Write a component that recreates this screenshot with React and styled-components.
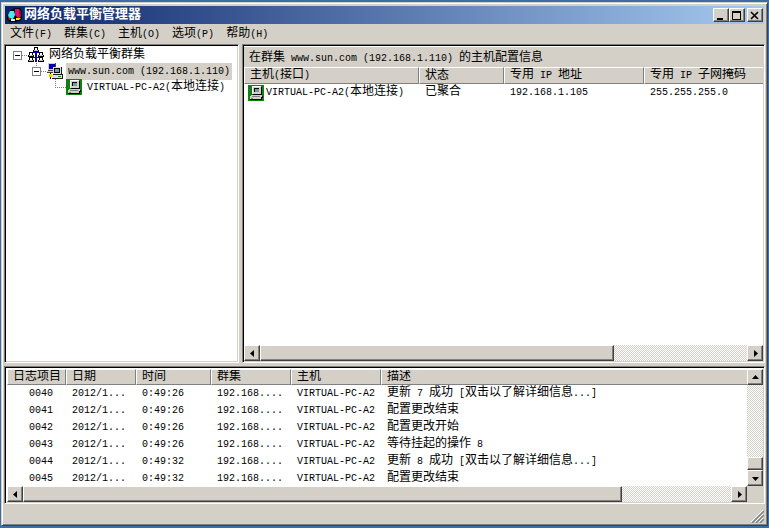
import { Fragment } from 'react';
import styled, { createGlobalStyle, css } from 'styled-components';

const GlobalStyle = createGlobalStyle`
      * {
            box-sizing: border-box;
      }

      body {
            margin: 0;
            background: #3a6ea5;
            color: #000;
            font-family: 'Liberation Mono', 'Noto Sans CJK SC', monospace;
            font-size: 12px;
            line-height: 16px;
            overflow: hidden;
      }

      button {
            font: inherit;
            color: inherit;
            padding: 0;
            border: 0;
            background: none;
      }

      svg {
            display: block;
            flex: none;
      }
`;

const raised = css`
      background: #d4d0c8;
      border: 1px solid;
      border-color: #fff #404040 #404040 #fff;
      box-shadow: inset -1px -1px 0 #808080;
`;

const Desktop = styled.div`
      height: 100vh;
      padding: 2px 1px;
      display: flex;
      background: #3a6ea5;
`;

const Window = styled.main`
      flex: 1;
      min-width: 0;
      display: flex;
      flex-direction: column;
      padding: 2px;
      background: #d4d0c8;
      border: 1px solid;
      border-color: #d4d0c8 #404040 #404040 #d4d0c8;
      box-shadow: inset 1px 1px 0 #fff, inset -1px -1px 0 #808080;
`;

const TitleBar = styled.header`
      display: flex;
      align-items: center;
      flex: none;
      height: 18px;
      padding: 0 1px 0 2px;
      margin: 1px 1px 0;
      background: linear-gradient(90deg, #0a246a, #a6caf0);
      color: #fff;
`;

const Title = styled.h1`
      flex: 1;
      margin: 0;
      padding-left: 1px;
      font-size: 13px;
      font-weight: bold;
      line-height: 18px;
      white-space: nowrap;
`;

const CaptionButton = styled.button`
      ${raised}
      width: 16px;
      height: 14px;
      display: grid;
      place-items: center;
      margin-left: ${({ $apart }) => ($apart ? '2px' : '0')};
`;

const MenuBar = styled.nav`
      display: flex;
      flex: none;
      height: 20px;
`;

const MenuItem = styled.button`
      padding: 0 6px;
      line-height: 20px;
      white-space: pre;
`;

const Latin = styled.span`
      font-size: 10px;
      white-space: pre;
`;

const Panes = styled.div`
      flex: 1;
      min-height: 0;
      display: flex;
      gap: 3px;
`;

const Sunken = styled.section`
      display: flex;
      flex-direction: column;
      min-width: 0;
      overflow: hidden;
      background: #fff;
      border: 1px solid;
      border-color: #808080 #fff #fff #808080;
      box-shadow: inset 1px 1px 0 #000, inset -1px -1px 0 #d4d0c8;
      padding: 2px 1px 1px;
`;

const TreePane = styled(Sunken)`
      width: 235px;
      flex: none;
`;

const HostPane = styled(Sunken)`
      flex: 1;
`;

const LogPane = styled(Sunken)`
      flex: none;
      height: 138px;
      margin-top: 3px;
      padding-left: 2px;
`;

const TreeRow = styled.div`
      display: flex;
      align-items: center;
      height: 16px;
      padding-left: 3px;
`;

const TreeLabel = styled.span`
      margin-left: 3px;
      padding: 0 2px;
      line-height: 16px;
      white-space: nowrap;
      background: ${({ $selected }) => ($selected ? '#d4d0c8' : 'transparent')};
`;

const Expander = styled.button`
      display: block;
      width: 19px;
      height: 16px;
`;

const Gutter = styled.span`
      width: 19px;
      height: 16px;
`;

const Caption = styled.h2`
      flex: none;
      margin: 0;
      padding: 2px 5px 0;
      height: 20px;
      background: #d4d0c8;
      font-size: 12px;
      font-weight: normal;
      line-height: 18px;
      white-space: nowrap;
`;

const TableArea = styled.div`
      flex: 1;
      min-height: 0;
      overflow: hidden;
`;

const Table = styled.table`
      width: 100%;
      table-layout: fixed;
      border-collapse: separate;
      border-spacing: 0;
`;

const Th = styled.th`
      height: 16px;
      padding: 0 5px;
      background: #d4d0c8;
      border: 1px solid;
      border-color: #fff #808080 #808080 #fff;
      font-weight: normal;
      line-height: 14px;
      text-align: ${({ $align }) => $align || 'left'};
      white-space: nowrap;
      overflow: hidden;

      &:last-child {
            border-right: 0;
      }
`;

const Td = styled.td`
      height: 17px;
      padding: 0 ${({ $align }) => ($align ? '13px' : '6px')} 0 6px;
      line-height: 17px;
      text-align: ${({ $align }) => $align || 'left'};
      white-space: nowrap;
`;

const HostCell = styled.td`
      height: 17px;
      padding: 0 4px;
      white-space: nowrap;
`;

const HostName = styled.span`
      display: flex;
      align-items: center;
      gap: 2px;
      height: 16px;
`;

const LogBody = styled.div`
      flex: 1;
      min-height: 0;
      display: flex;
`;

const ScrollRow = styled.div`
      display: flex;
      flex: none;
`;

const Bar = styled.div`
      display: flex;
      flex: ${({ $vertical }) => ($vertical ? 'none' : '1')};
      flex-direction: ${({ $vertical }) => ($vertical ? 'column' : 'row')};
      background: repeating-conic-gradient(#fff 0 25%, #d4d0c8 0 50%) 0 0 / 2px 2px;
`;

const ArrowButton = styled.button`
      ${raised}
      flex: none;
      width: 16px;
      height: 16px;
      display: grid;
      place-items: center;
`;

const Gap = styled.span`
      flex: ${({ $grow }) => $grow} 1 0;
`;

const Thumb = styled.span`
      ${raised}
      flex: ${({ $grow }) => $grow} 1 0;
`;

const Corner = styled.span`
      width: 16px;
      background: #d4d0c8;
`;

const StatusBar = styled.footer`
      flex: none;
      display: flex;
      justify-content: flex-end;
      align-items: flex-end;
      height: 19px;
      padding-right: 1px;
`;

/* half-width runs are set smaller so that two of them fill one full-width cell */
const Mixed = ({ text }) =>
      text
            .split(/([\x20-\x7e]+)/)
            .filter(Boolean)
            .map((run, i) =>
                  /^[\x20-\x7e]/.test(run) ? (
                        <Latin key={i}>{run}</Latin>
                  ) : (
                        <Fragment key={i}>{run}</Fragment>
                  )
            );

const AppIcon = () => (
      <svg width="16" height="16" viewBox="0 0 16 16">
            <path d="M4 3 8 1l5 0 2 4v6l-2 3-5 1-5 0-3-3 0-4z" fill="#000" />
            <path d="M3 4h4l1 4-2 4-4-1-1-3z" fill="#40f0f0" />
            <path d="M8 2h4l2 3v5l-3 1-3-3z" fill="#e0106c" />
            <path d="M12 3l2 2v5l-1 0z" fill="#900040" />
            <path d="M9 11l5 0-2 2H9z" fill="#f8f000" />
            <path d="M4 12h4v2H4z" fill="#e8e8e8" />
            <path d="M1 10h1l2 3H2z" fill="#f00000" />
      </svg>
);

const ClusterIcon = () => (
      <svg width="16" height="16" viewBox="0 0 16 16" shapeRendering="crispEdges">
            <path d="M7 4h2v11H7zM4 5h9v1H4zM4 10h9v1H4z" fill="#0000c0" />
            {[
                  [6, 0],
                  [1, 5],
                  [11, 5],
                  [1, 10],
                  [11, 10],
            ].map(([x, y]) => (
                  <g key={`${x}-${y}`}>
                        <rect x={x} y={y} width="4" height="4" fill="#000" />
                        <rect x={x + 1} y={y + 1} width="2" height="2" fill="#fff" />
                        <rect x={x - 1} y={y + 3} width="6" height="2" fill="#000" />
                        <rect x={x} y={y + 3} width="4" height="1" fill="#c0c0c0" />
                  </g>
            ))}
      </svg>
);

const PairIcon = () => (
      <svg width="16" height="16" viewBox="0 0 16 16" shapeRendering="crispEdges">
            <path d="M1 0h8v7h1v3H0V8h1z" fill="#404040" />
            <path d="M1 0h7v7H1zM0 8h7v1H0z" fill="#d4d0c8" />
            <path d="M2 1h6v5H2z" fill="#0000a8" />
            <path d="M3 10h1v6H3zM3 13h3v1H3z" fill="#000080" />
            <path d="M2 11h3v3H2z" fill="#e8d800" />
            <path d="M6 4h9v7h1v5H5v-4h1z" fill="#202020" />
            <path d="M6 4h8v7H6zM5 12h10v3H5z" fill="#e0ded8" />
            <path d="M7 5h6v5H7z" fill="#000" />
            <path d="M8 6h4v3H8z" fill="#60a8a8" />
            <path d="M11 13h3v1h-3z" fill="#00a000" />
      </svg>
);

const HostIcon = () => (
      <svg width="16" height="16" viewBox="0 0 16 16" shapeRendering="crispEdges">
            <rect width="16" height="16" fill="#108010" />
            <path d="M5 2h9v8H5zM3 11h12v1l-1 3H2v-2z" fill="#000" />
            <path d="M4 1h9v8H4z" fill="#d4d0c8" />
            <path d="M4 1h9v1H5v7H4z" fill="#fff" />
            <path d="M6 3h5v4H6z" fill="#000" />
            <path d="M7 4h4v3H7z" fill="#68a0a0" />
            <path d="M3 10h11v1l-1 3H2v-2z" fill="#d4d0c8" />
            <path d="M4 11h8v1H4zM3 13h2v1H3z" fill="#808080" />
      </svg>
);

const ExpanderBox = ({ lineUp }) => (
      <svg width="19" height="16" viewBox="0 0 19 16" shapeRendering="crispEdges">
            {lineUp && (
                  <path d="M8.500 0v4" stroke="#808080" strokeDasharray="1 1" />
            )}
            <path d="M13 8.500h6" stroke="#808080" strokeDasharray="1 1" />
            <rect x="4.500" y="4.500" width="8" height="8" fill="#fff" stroke="#808080" />
            <path d="M6 8.500h5" stroke="#000" />
      </svg>
);

const Elbow = () => (
      <svg width="19" height="16" viewBox="0 0 19 16" shapeRendering="crispEdges">
            <path d="M8.500 0v8.500h11" fill="none" stroke="#808080" strokeDasharray="1 1" />
      </svg>
);

const ARROWS = {
      left: 'M5 0v7L1 3.500z',
      right: 'M2 0v7l4-3.500z',
      up: 'M0 5h7L3.500 1z',
      down: 'M0 2h7L3.500 6z',
};

const Arrow = ({ dir, label }) => (
      <ArrowButton aria-label={label}>
            <svg width="7" height="7" viewBox="0 0 7 7">
                  <path d={ARROWS[dir]} />
            </svg>
      </ArrowButton>
);

const ScrollBar = ({ vertical, before = 0, thumb, after }) => (
      <Bar $vertical={vertical}>
            <Arrow dir={vertical ? 'up' : 'left'} label={vertical ? '向上' : '向左'} />
            <Gap $grow={before} />
            <Thumb $grow={thumb} />
            <Gap $grow={after} />
            <Arrow dir={vertical ? 'down' : 'right'} label={vertical ? '向下' : '向右'} />
      </Bar>
);

const MENUS = ['文件(F)', '群集(C)', '主机(O)', '选项(P)', '帮助(H)'];

const LOGS = [
      ['0040', '0:49:26', '更新 7 成功 [双击以了解详细信息...]'],
      ['0041', '0:49:26', '配置更改结束'],
      ['0042', '0:49:26', '配置更改开始'],
      ['0043', '0:49:26', '等待挂起的操作 8'],
      ['0044', '0:49:32', '更新 8 成功 [双击以了解详细信息...]'],
      ['0045', '0:49:32', '配置更改结束'],
];

const App = () => {
      return (
            <Desktop>
                  <GlobalStyle />
                  <Window>
                        <TitleBar>
                              <AppIcon />
                              <Title>网络负载平衡管理器</Title>
                              <CaptionButton aria-label="最小化">
                                    <svg width="10" height="9" shapeRendering="crispEdges">
                                          <path d="M1 7h6v2H1z" />
                                    </svg>
                              </CaptionButton>
                              <CaptionButton aria-label="最大化">
                                    <svg width="10" height="9" shapeRendering="crispEdges">
                                          <path d="M0 0h9v9H0zM1 2v6h7V2z" fillRule="evenodd" />
                                    </svg>
                              </CaptionButton>
                              <CaptionButton aria-label="关闭" $apart>
                                    <svg width="10" height="9">
                                          <path d="M1 1l7 7M8 1l-7 7" stroke="#000" strokeWidth="1.600" />
                                    </svg>
                              </CaptionButton>
                        </TitleBar>

                        <MenuBar>
                              {MENUS.map((name) => (
                                    <MenuItem key={name}>
                                          <Mixed text={name} />
                                    </MenuItem>
                              ))}
                        </MenuBar>

                        <Panes>
                              <TreePane>
                                    <TreeRow>
                                          <Expander aria-label="折叠">
                                                <ExpanderBox />
                                          </Expander>
                                          <ClusterIcon />
                                          <TreeLabel>网络负载平衡群集</TreeLabel>
                                    </TreeRow>
                                    <TreeRow>
                                          <Gutter />
                                          <Expander aria-label="折叠">
                                                <ExpanderBox lineUp />
                                          </Expander>
                                          <PairIcon />
                                          <TreeLabel $selected>
                                                <Mixed text="www.sun.com (192.168.1.110)" />
                                          </TreeLabel>
                                    </TreeRow>
                                    <TreeRow>
                                          <Gutter />
                                          <Gutter />
                                          <Elbow />
                                          <HostIcon />
                                          <TreeLabel>
                                                <Mixed text="VIRTUAL-PC-A2(本地连接)" />
                                          </TreeLabel>
                                    </TreeRow>
                              </TreePane>

                              <HostPane>
                                    <Caption>
                                          <Mixed text="在群集 www.sun.com (192.168.1.110) 的主机配置信息" />
                                    </Caption>
                                    <TableArea>
                                          <Table>
                                                <colgroup>
                                                      <col width="175" />
                                                      <col width="85" />
                                                      <col width="140" />
                                                      <col />
                                                </colgroup>
                                                <thead>
                                                      <tr>
                                                            {['主机(接口)', '状态', '专用 IP 地址', '专用 IP 子网掩码'].map((name) => (
                                                                  <Th key={name}>
                                                                        <Mixed text={name} />
                                                                  </Th>
                                                            ))}
                                                      </tr>
                                                </thead>
                                                <tbody>
                                                      <tr>
                                                            <HostCell>
                                                                  <HostName>
                                                                        <HostIcon />
                                                                        <span>
                                                                              <Mixed text="VIRTUAL-PC-A2(本地连接)" />
                                                                        </span>
                                                                  </HostName>
                                                            </HostCell>
                                                            <Td>已聚合</Td>
                                                            <Td>
                                                                  <Mixed text="192.168.1.105" />
                                                            </Td>
                                                            <Td>
                                                                  <Mixed text="255.255.255.0" />
                                                            </Td>
                                                      </tr>
                                                </tbody>
                                          </Table>
                                    </TableArea>
                                    <ScrollRow>
                                          <ScrollBar thumb={354} after={134} />
                                    </ScrollRow>
                              </HostPane>
                        </Panes>

                        <LogPane>
                              <LogBody>
                                    <TableArea>
                                          <Table>
                                                <colgroup>
                                                      <col width="59" />
                                                      <col width="70" />
                                                      <col width="75" />
                                                      <col width="80" />
                                                      <col width="90" />
                                                      <col />
                                                </colgroup>
                                                <thead>
                                                      <tr>
                                                            <Th $align="right">日志项目</Th>
                                                            <Th>日期</Th>
                                                            <Th>时间</Th>
                                                            <Th>群集</Th>
                                                            <Th>主机</Th>
                                                            <Th>描述</Th>
                                                      </tr>
                                                </thead>
                                                <tbody>
                                                      {LOGS.map(([id, time, text]) => (
                                                            <tr key={id}>
                                                                  <Td $align="right">
                                                                        <Mixed text={id} />
                                                                  </Td>
                                                                  <Td>
                                                                        <Mixed text="2012/1..." />
                                                                  </Td>
                                                                  <Td>
                                                                        <Mixed text={time} />
                                                                  </Td>
                                                                  <Td>
                                                                        <Mixed text="192.168...." />
                                                                  </Td>
                                                                  <Td>
                                                                        <Mixed text="VIRTUAL-PC-A2" />
                                                                  </Td>
                                                                  <Td>
                                                                        <Mixed text={text} />
                                                                  </Td>
                                                            </tr>
                                                      ))}
                                                </tbody>
                                          </Table>
                                    </TableArea>
                                    <ScrollBar vertical before={75} thumb={11} after={0} />
                              </LogBody>
                              <ScrollRow>
                                    <ScrollBar thumb={599} after={109} />
                                    <Corner />
                              </ScrollRow>
                        </LogPane>

                        <StatusBar>
                              <svg width="13" height="13" viewBox="0 0 13 13">
                                    <path d="M0 12 12 0M4 12l8-8M8 12l4-4" stroke="#fff" />
                                    <path d="M1 13 13 1M5 13l8-8M9 13l4-4" stroke="#808080" strokeWidth="1.500" />
                              </svg>
                        </StatusBar>
                  </Window>
            </Desktop>
      );
};

export default App;
